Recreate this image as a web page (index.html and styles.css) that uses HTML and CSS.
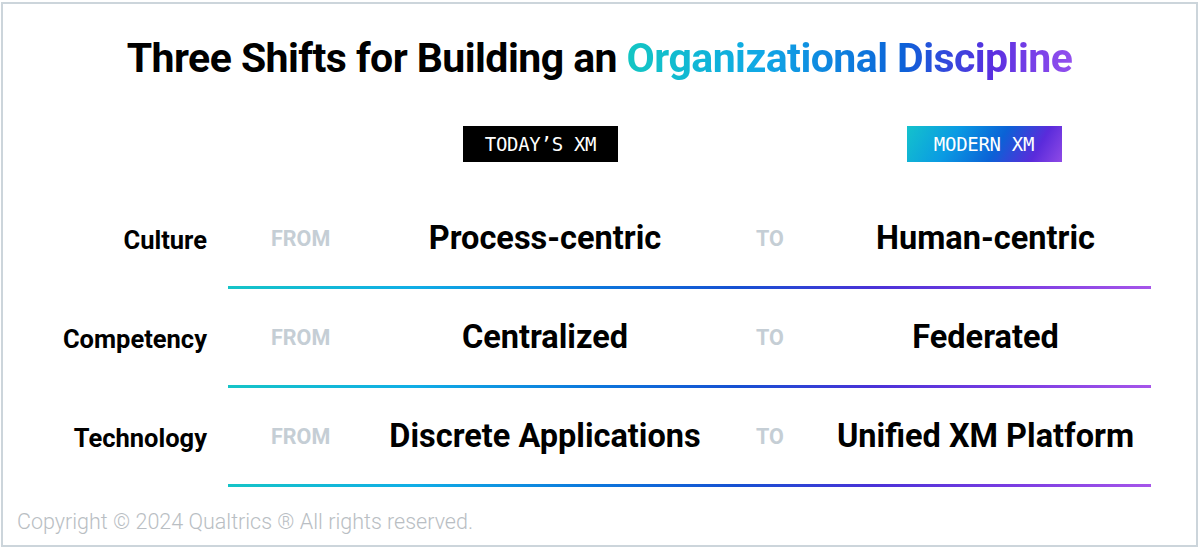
FILE: index.html
```html
<!DOCTYPE html>
<html lang="en">
<head>
<meta charset="utf-8">
<title>Three Shifts</title>
<link rel="stylesheet" href="styles.css">
</head>
<body>
<div class="frame">
  <h1 class="title">Three Shifts for Building an <span class="grad-text">Organizational Discipline</span></h1>
  <div class="row head">
    <div class="badge badge-today">TODAY’S XM</div>
    <div class="badge badge-modern">MODERN XM</div>
  </div>

  <div class="row shift">
    <div class="label">Culture</div>
    <div class="word">FROM</div>
    <div class="main">Process-centric</div>
    <div class="word to">TO</div>
    <div class="main right">Human-centric</div>
  </div>
  <div class="rule"></div>

  <div class="row shift">
    <div class="label">Competency</div>
    <div class="word">FROM</div>
    <div class="main">Centralized</div>
    <div class="word to">TO</div>
    <div class="main right">Federated</div>
  </div>
  <div class="rule"></div>

  <div class="row shift">
    <div class="label">Technology</div>
    <div class="word">FROM</div>
    <div class="main">Discrete Applications</div>
    <div class="word to">TO</div>
    <div class="main right">Unified XM Platform</div>
  </div>
  <div class="rule"></div>

  <p class="copyright">Copyright © 2024 Qualtrics ® All rights reserved.</p>
</div>
</body>
</html>
```

FILE: styles.css
```css
html, body {
  margin: 0;
  padding: 0;
  background: #ffffff;
}
body {
  font-family: Roboto, "Liberation Sans", Arial, sans-serif;
  color: #000;
}
.frame {
  box-sizing: border-box;
  margin: 2px 0 0 1px;
  width: 1197px;
  height: 545px;
  border: 2px solid #ccd5db;
  background: #fff;
}
.title {
  margin: 30px 0 44px;
  height: 48px;
  line-height: 48px;
  font-size: 41px;
  font-weight: 700;
  text-align: center;
  white-space: nowrap;
  letter-spacing: -0.55px;
}
.grad-text {
  background: linear-gradient(90deg, #13c6c3 0%, #10a8e6 30%, #0d62d8 62%, #5a2fe0 82%, #9350ee 100%);
  -webkit-background-clip: text;
  background-clip: text;
  color: transparent;
}
.row {
  display: grid;
  grid-template-columns: 225px 122px 390px 60px 370px;
}
.head {
  height: 36px;
  margin-bottom: 28px;
}
.shift {
  height: 96px;
}
.badge {
  width: 155px;
  height: 36px;
  line-height: 36px;
  text-align: center;
  color: #fff;
  font-family: "DejaVu Sans Mono", "Liberation Mono", monospace;
  font-size: 19px;
  letter-spacing: -0.3px;
  justify-self: center;
}
.badge-today {
  grid-column: 3;
  background: #000;
  margin-right: 9px;
}
.badge-modern {
  grid-column: 5;
  background: linear-gradient(120deg, #14c2cc 0%, #0a9be3 30%, #0b62d6 58%, #5a2bdb 82%, #8f4ae6 100%);
  margin-right: 2px;
}
.label, .word, .main {
  display: flex;
  align-items: center;
}
.label {
  justify-content: flex-end;
  padding-right: 21px;
  padding-top: 4px;
  font-size: 25.5px;
  font-weight: 700;
}
.word {
  font-size: 21.5px;
  font-weight: 700;
  color: #c5ced5;
  padding-left: 43px;
}
.word.to {
  padding-left: 16px;
}
.main {
  justify-content: center;
  font-size: 32.5px;
  font-weight: 700;
  white-space: nowrap;
}
.main.right {
  padding-left: 1px;
}
.rule {
  height: 3px;
  margin: 0 45px 0 225px;
  background: linear-gradient(90deg, #15c4c7 0%, #10aee6 20%, #0c76dc 40%, #1651d2 55%, #4a32d8 70%, #7a3ce2 85%, #a655ea 100%);
}
.copyright {
  margin: 23px 0 0;
  padding-left: 14px;
  font-size: 21.5px;
  line-height: 24px;
  font-weight: 300;
  color: #b9bec3;
}
```
